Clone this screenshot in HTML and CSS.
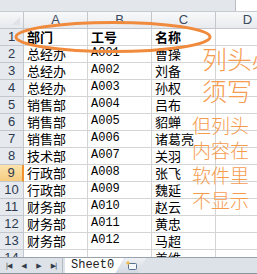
FILE: index.html
```html
<!DOCTYPE html>
<html lang="zh">
<head>
<meta charset="UTF-8">
<meta name="viewport" content="width=device-width, initial-scale=1.0">
<link rel="stylesheet" href="styles.css">
</head>
<body>
<div class="window">
  <div class="formula-bar">
    <div class="formula-fill"></div>
    <div class="formula-box"></div>
  </div>

  <div class="sheet">
    <div class="grid">
      <div class="corner"><span class="corner-tri"></span></div>
      <div class="col-head">A</div>
      <div class="col-head">B</div>
      <div class="col-head">C</div>
      <div class="col-head">D</div>

      <div class="row-head">1</div>
      <div class="cell bold">部门</div><div class="cell bold">工号</div><div class="cell bold">名称</div><div class="cell"></div>
      <div class="row-head">2</div>
      <div class="cell">总经办</div><div class="cell code">A001</div><div class="cell">曹操</div><div class="cell"></div>
      <div class="row-head">3</div>
      <div class="cell">总经办</div><div class="cell code">A002</div><div class="cell">刘备</div><div class="cell"></div>
      <div class="row-head">4</div>
      <div class="cell">总经办</div><div class="cell code">A003</div><div class="cell">孙权</div><div class="cell"></div>
      <div class="row-head">5</div>
      <div class="cell">销售部</div><div class="cell code">A004</div><div class="cell">吕布</div><div class="cell"></div>
      <div class="row-head">6</div>
      <div class="cell">销售部</div><div class="cell code">A005</div><div class="cell">貂蝉</div><div class="cell"></div>
      <div class="row-head">7</div>
      <div class="cell">销售部</div><div class="cell code">A006</div><div class="cell">诸葛亮</div><div class="cell"></div>
      <div class="row-head">8</div>
      <div class="cell">技术部</div><div class="cell code">A007</div><div class="cell">关羽</div><div class="cell"></div>
      <div class="row-head active">9</div>
      <div class="cell">行政部</div><div class="cell code">A008</div><div class="cell">张飞</div><div class="cell"></div>
      <div class="row-head">10</div>
      <div class="cell">行政部</div><div class="cell code">A009</div><div class="cell">魏延</div><div class="cell"></div>
      <div class="row-head">11</div>
      <div class="cell">财务部</div><div class="cell code">A010</div><div class="cell">赵云</div><div class="cell"></div>
      <div class="row-head">12</div>
      <div class="cell">财务部</div><div class="cell code">A011</div><div class="cell">黄忠</div><div class="cell"></div>
      <div class="row-head">13</div>
      <div class="cell">财务部</div><div class="cell code">A012</div><div class="cell">马超</div><div class="cell"></div>
      <div class="row-head">14</div>
      <div class="cell"></div><div class="cell code"></div><div class="cell">姜维</div><div class="cell"></div>
    </div>

    <!-- Markierung um die Kopfzeile -->
    <svg class="ring" width="257" height="60" viewBox="0 0 257 60">
      <ellipse cx="113" cy="25" rx="97" ry="14.5" fill="none" stroke="#f08a3c" stroke-width="3"/>
    </svg>

    <div class="note note-big">列头必<br>须写</div>
    <div class="note note-small">但列头<br>内容在<br>软件里<br>不显示</div>
  </div>

  <div class="tabs">
    <div class="tab-nav">
      <span class="nav-btn">|◀</span><span class="nav-btn">◀</span><span class="nav-btn">▶</span><span class="nav-btn">▶|</span>
    </div>
    <div class="tab-sheet">Sheet0</div>
    <div class="tab-new">
      <svg width="14" height="11" viewBox="0 0 14 11">
        <rect x="4.5" y="3.5" width="8" height="6" rx="1" fill="#f4f7fb" stroke="#56708f"/>
        <path d="M4 0.5 L4.8 2.6 L7 3 L4.8 3.5 L4 5.6 L3.2 3.5 L1 3 L3.2 2.6 Z" fill="#f5b021"/>
      </svg>
    </div>
  </div>
  <div class="status"></div>
</div>
</body>
</html>
```

FILE: styles.css
```css
body {
  margin: 0;
  background: #ffffff;
  font-family: "Noto Sans CJK SC", sans-serif;
}

.window {
  width: 257px;
  height: 274px;
  overflow: hidden;
  display: flex;
  flex-direction: column;
}

.formula-bar {
  height: 11px;
  display: flex;
  border-bottom: 1px solid #c6cbd2;
}

.formula-fill {
  flex: 1;
  background: #e3e6ea;
}

.formula-box {
  width: 21px;
  background: #ffffff;
  border-left: 1px solid #b9bec6;
}

.sheet {
  position: relative;
  height: 245px;
  overflow: hidden;
}

.grid {
  display: grid;
  grid-template-columns: 24px 64px 64px 64px 64px;
  grid-auto-rows: 17px;
}

.corner,
.col-head,
.row-head,
.cell {
  box-sizing: border-box;
  border-right: 1px solid #d4d4d4;
  border-bottom: 1px solid #d4d4d4;
  white-space: nowrap;
}

.corner {
  position: relative;
  background: linear-gradient(#f7f8f9, #e6e9ed);
  border-color: #c3c7cd;
}

.corner-tri {
  position: absolute;
  right: 3px;
  bottom: 3px;
  width: 0;
  height: 0;
  border-left: 8px solid transparent;
  border-bottom: 8px solid #dfe2e6;
}

.col-head {
  background: linear-gradient(#f8f9fa, #e8eaee);
  border-color: #c3c7cd;
  color: #3c4a5e;
  font-family: "Liberation Sans", sans-serif;
  font-size: 13px;
  line-height: 16px;
  text-align: center;
}

.row-head {
  background: #e6e9ee;
  border-color: #c3c7cd;
  color: #2c3a50;
  font-family: "Liberation Sans", sans-serif;
  font-size: 13px;
  line-height: 16px;
  text-align: center;
}

.row-head.active {
  background: linear-gradient(#fbe3ad, #f6cc80);
  border-right: 2px solid #f0922f;
}

.cell {
  display: flex;
  align-items: flex-end;
  padding: 0 3px 1px;
  font-size: 13px;
  line-height: 15px;
  color: #000000;
}

.cell.bold {
  font-weight: bold;
}

.cell.code {
  font-family: "Liberation Mono", monospace;
  font-size: 12px;
}

.ring {
  position: absolute;
  left: 0;
  top: 0;
}

.note {
  position: absolute;
  color: #f69c4f;
  font-weight: 300;
  white-space: nowrap;
}

.note-big {
  left: 202px;
  top: 30px;
  font-size: 25px;
  line-height: 32px;
}

.note-small {
  left: 192px;
  top: 100px;
  font-size: 19px;
  line-height: 25px;
}

.tabs {
  height: 15px;
  display: flex;
  align-items: stretch;
  background: #dde2e9;
  border-top: 1px solid #9aa2ad;
}

.tab-nav {
  width: 62px;
  display: flex;
  align-items: center;
  border-right: 1px solid #b4bbc5;
  font-size: 7px;
  line-height: 14px;
  color: #333c48;
  font-family: "DejaVu Sans", sans-serif;
}

.nav-btn {
  width: 13px;
  margin-left: 2px;
  text-align: center;
  letter-spacing: -1px;
}

.tab-sheet {
  margin-left: 2px;
  padding: 0 10px 0 6px;
  background: #ffffff;
  clip-path: polygon(0 0, 100% 0, calc(100% - 9px) 100%, 0 100%);
  font-family: "Liberation Mono", monospace;
  font-size: 12px;
  line-height: 15px;
  color: #222222;
}

.tab-new {
  margin-left: -8px;
  width: 30px;
  display: flex;
  align-items: center;
  justify-content: center;
  background: linear-gradient(#eef1f5, #d3d9e1);
  clip-path: polygon(9px 0, 100% 0, calc(100% - 9px) 100%, 0 100%);
}

.status {
  flex: 1;
  background: #8d949e;
}
```
